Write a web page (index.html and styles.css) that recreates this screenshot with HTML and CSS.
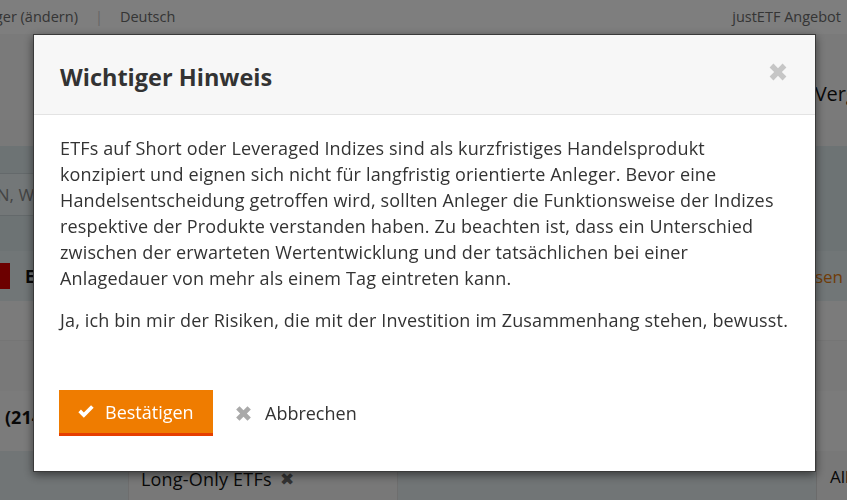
FILE: index.html
```html
<!DOCTYPE html>
<html lang="de">
<head>
<meta charset="utf-8">
<title>Wichtiger Hinweis</title>
<link rel="stylesheet" href="styles.css">
</head>
<body>
<div class="page">
  <div class="topbar">
    <div class="topbar-left"><span>Anleger (ändern)</span><span class="sep">|</span><span>Deutsch</span></div>
    <div class="topbar-right">justETF Angebot</div>
  </div>
  <div class="header-row"><span class="nav-item">Vergleich</span></div>
  <div class="band-a"></div>
  <div class="search-row"><div class="search-input">ISIN, WKN, Name</div></div>
  <div class="filter-row">
    <div class="filter-left"><span class="red-box"></span><span class="filter-title">Einstellungen</span></div>
    <span class="filter-link">Anpassen</span>
  </div>
  <div class="band-c"></div>
  <div class="band-d"></div>
  <div class="result-row"><span class="result-count">(214)</span></div>
  <div class="tag-row">
    <span class="tag-spacer"></span>
    <span class="tag">Long-Only ETFs <span class="tag-x">✖</span></span>
    <span class="tag-right">Alle</span>
  </div>
</div>

<div class="backdrop"></div>

<div class="modal" role="dialog">
  <div class="modal-header">
    <h2 class="modal-title">Wichtiger Hinweis</h2>
    <button class="modal-close" aria-label="Schließen">
      <svg viewBox="0 0 20 20" width="24" height="24"><path d="M3 6.2 6.2 3 10 6.8 13.8 3 17 6.2 13.2 10 17 13.8 13.8 17 10 13.2 6.2 17 3 13.8 6.8 10Z" fill="#c6c6c6"/></svg>
    </button>
  </div>
  <div class="modal-body">
    <p>ETFs auf Short oder Leveraged Indizes sind als kurzfristiges Handelsprodukt konzipiert und eignen sich nicht für langfristig orientierte Anleger. Bevor eine Handelsentscheidung getroffen wird, sollten Anleger die Funktionsweise der Indizes respektive der Produkte verstanden haben. Zu beachten ist, dass ein Unterschied zwischen der erwarteten Wertentwicklung und der tatsächlichen bei einer Anlagedauer von mehr als einem Tag eintreten kann.</p>
    <p>Ja, ich bin mir der Risiken, die mit der Investition im Zusammenhang stehen, bewusst.</p>
  </div>
  <div class="modal-footer">
    <button class="btn-confirm">
      <svg viewBox="0 0 20 20" width="18" height="18"><path d="M1.5 10.2 4.4 7.3 7.6 10.5 15.6 2.5 18.5 5.4 7.6 16.3Z" fill="#fff"/></svg>
      <span>Bestätigen</span>
    </button>
    <button class="btn-cancel">
      <svg viewBox="0 0 20 20" width="21" height="21"><path d="M3 6.2 6.2 3 10 6.8 13.8 3 17 6.2 13.2 10 17 13.8 13.8 17 10 13.2 6.2 17 3 13.8 6.8 10Z" fill="#a9a9a9"/></svg>
      <span>Abbrechen</span>
    </button>
  </div>
</div>
</body>
</html>
```

FILE: styles.css
```css
* { box-sizing: border-box; }
html, body { margin: 0; padding: 0; }
body {
  font-family: "Open Sans", "Liberation Sans", sans-serif;
  color: #333;
  background: #f4f4f4;
  width: 847px;
  height: 500px;
  overflow: hidden;
}

.page { width: 847px; overflow: hidden; }

.topbar {
  height: 34px;
  background: #fcfcfc;
  display: flex;
  justify-content: space-between;
  align-items: center;
  font-size: 14.5px;
  color: #6a6a6a;
  padding: 0 6px 2px 0;
  white-space: nowrap;
}
.topbar-left { margin-left: -35px; display: flex; align-items: center; }
.topbar-left .sep { margin: 0 17px; color: #ccc; }

.header-row {
  height: 86px;
  background: #f4f4f4;
  display: flex;
  justify-content: flex-end;
  align-items: center;
  padding-top: 32px;
  white-space: nowrap;
}
.nav-item { font-size: 20px; color: #111; margin-right: -53px; }

.band-a { height: 26px; background: #f2f2f2; }
.search-row {
  height: 105px;
  background: #dbe6e9;
  padding-top: 27px;
}
.search-input {
  height: 43px;
  background: #e6eef0;
  border-top: 1px solid #c8d3d6;
  border-bottom: 1px solid #c8d3d6;
  margin-left: -22px;
  width: 400px;
  font-size: 17px;
  color: #888;
  line-height: 41px;
  white-space: nowrap;
}
.filter-row {
  height: 50px;
  background: #e2ecee;
  display: flex;
  justify-content: space-between;
  align-items: center;
  white-space: nowrap;
}
.filter-left { display: flex; align-items: center; margin-left: -16px; }
.red-box { width: 26px; height: 26px; background: #d80000; display: inline-block; margin-right: 15px; }
.filter-title { font-weight: bold; font-size: 17px; color: #111; }
.filter-link { color: #e07a10; font-size: 17px; margin-right: 4px; }

.band-c { height: 40px; background: #f6f6f6; border-bottom: 1px solid #eaeaea; }
.band-d { height: 50px; background: #f2f2f2; }
.result-row {
  height: 60px;
  background: #f6f6f6;
  display: flex;
  align-items: center;
  padding-bottom: 8px;
}
.result-count { font-weight: bold; font-size: 18px; color: #111; margin-left: 5px; }

.tag-row {
  height: 60px;
  background: #e3ebed;
  display: flex;
  align-items: flex-start;
  white-space: nowrap;
}
.tag-spacer { width: 128px; flex: none; }
.tag {
  display: inline-flex;
  align-items: center;
  height: 56px;
  padding: 0 12px;
  background: #f0f0f0;
  border: 1px solid #dcdcdc;
  border-top: none;
  font-size: 18px;
  letter-spacing: 0.2px;
  color: #111;
  width: 270px;
}
.tag-x { color: #666; margin-left: 8px; font-size: 17px; }
.tag-right {
  margin-left: auto;
  width: 31px;
  height: 56px;
  background: #f0f0f0;
  border-left: 1px solid #d6d6d6;
  font-size: 17px;
  color: #111;
  padding: 14px 0 0 13px;
  overflow: hidden;
}

.backdrop {
  position: fixed;
  inset: 0;
  background: rgba(0, 0, 0, 0.5);
}

.modal {
  position: fixed;
  left: 33px;
  top: 34px;
  width: 783px;
  height: 438px;
  background: #fff;
  border: 1px solid #3a3a3a;
  box-shadow: 0 3px 9px rgba(0, 0, 0, 0.5);
  display: flex;
  flex-direction: column;
}
.modal-header {
  height: 80px;
  background: #f7f7f7;
  border-bottom: 1px solid #e3e3e3;
  display: flex;
  align-items: center;
  justify-content: space-between;
  padding: 5px 25px 0 26px;
}
.modal-title {
  margin: 0;
  font-size: 23.5px;
  font-weight: 700;
  color: #333;
}
.modal-close {
  border: 0;
  background: none;
  padding: 0;
  margin: 0 0 10px 0;
  display: flex;
  cursor: pointer;
}
.modal-body {
  padding: 20px 26px 0 26px;
  font-size: 18px;
  letter-spacing: 0.15px;
  line-height: 26px;
  color: #333;
}
.modal-body p { margin: 0 0 16px 0; }

.modal-footer {
  margin-top: auto;
  padding: 0 26px 35px 25px;
  display: flex;
  align-items: center;
  gap: 20px;
}
.btn-confirm {
  display: flex;
  align-items: center;
  gap: 10px;
  height: 46px;
  width: 154px;
  padding: 0 0 0 18px;
  background: #ef7c00;
  border: 0;
  border-bottom: 3px solid #e63e00;
  color: #fff;
  font-family: inherit;
  font-size: 18px;
  cursor: pointer;
}
.btn-cancel {
  display: flex;
  align-items: center;
  gap: 11px;
  background: none;
  border: 0;
  padding: 0;
  font-family: inherit;
  font-size: 18px;
  color: #333;
  cursor: pointer;
}
```
